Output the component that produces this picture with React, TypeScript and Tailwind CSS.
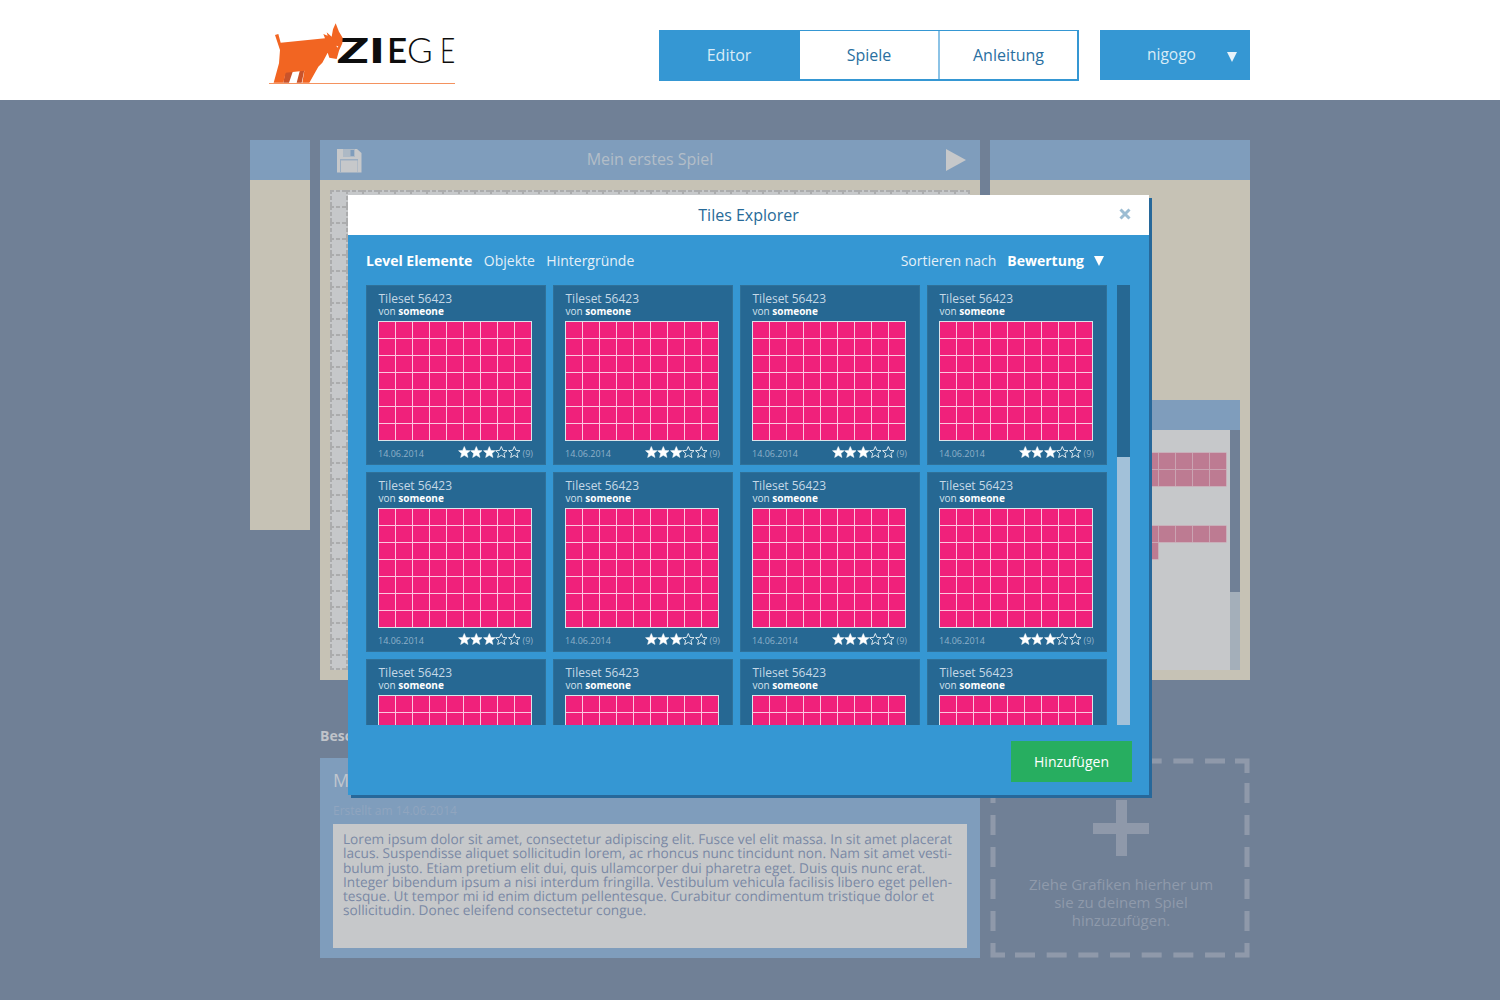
const cards = Array.from({ length: 12 });
const cells = Array.from({ length: 63 });

const lorem = [
  "Lorem ipsum dolor sit amet, consectetur adipiscing elit. Fusce vel elit massa. In sit amet placerat",
  "lacus. Suspendisse aliquet sollicitudin lorem, ac rhoncus nunc tincidunt non. Nam sit amet vesti-",
  "bulum justo. Etiam pretium elit dui, quis ullamcorper dui pharetra eget. Duis quis nunc erat.",
  "Integer bibendum ipsum a nisi interdum fringilla. Vestibulum vehicula facilisis libero eget pellen-",
  "tesque. Ut tempor mi id enim dictum pellentesque. Curabitur condimentum tristique dolor et",
  "sollicitudin. Donec eleifend consectetur congue.",
];

const Logo = () => (
  <div className="relative w-[409px] h-[100px]">
    <div className="absolute left-[87px] top-[37px] h-[25px] flex items-start font-['Lato'] text-[35px] leading-[25px] text-[#0d0d0d]">
      <span className="font-black w-[32px] scale-x-150 origin-left">Z</span>
      <span className="font-black w-[18px] scale-x-150 origin-left">I</span>
      <span className="font-semibold w-[20px]">E</span>
      <span className="font-light w-[33px]">G</span>
      <span className="font-light scale-x-75 origin-left">E</span>
    </div>
    <svg className="absolute left-[15px] top-[20px]" width="90" height="70" viewBox="0 0 270 210">
      <path d="M55 188L72 188L85 150L62 150ZM95 188L110 188L118 150L105 150Z" fill="#c9532a" />
      <path
        d="M30 45L40 42L47 68L180 55L175 42L188 47L185 37L200 50L204 28L212 10L222 35L233 53L232 70L222 92L215 117L193 113L188 98L172 128L160 140L133 188L112 188L118 152L62 158L55 188L26 188L42 130L45 90Z"
        fill="#f26522"
      />
      <path d="M214 77l6 2-3 4z" fill="#ffffff" />
    </svg>
    <div className="absolute left-[19px] top-[83px] w-[186px] h-px bg-[#f4925f]" />
  </div>
);

const Star = ({ filled }: { filled: boolean }) => (
  <svg width="12.6" height="12" viewBox="0 0 24 23">
    <polygon
      points="12,1 15.2,8.4 23,9 17,14.2 19,22 12,17.8 5,22 7,14.2 1,9 8.8,8.4"
      fill={filled ? "#ffffff" : "none"}
      stroke="#ffffff"
      strokeWidth={filled ? 1 : 1.6}
    />
  </svg>
);

const TileCard = ({ footer }: { footer: boolean }) => (
  <div className="h-[180px] border border-[#2f7199] bg-[#266893] px-[11px] pt-[6px]">
    <div className="ml-[0.5px] text-[12px] leading-[13px] text-[#c5d8e6]">Tileset 56423</div>
    <div className="ml-[0.5px] text-[10px] leading-[12px] text-[#d5e3ed]">
      von <span className="font-bold text-white">someone</span>
    </div>
    <div className="mt-[4px] w-[154px] h-[120px] grid grid-cols-[repeat(9,16px)] grid-rows-[repeat(7,16px)] gap-px border border-[#dbe3ea] bg-[#fcc7df]">
      {cells.map((_, i) => (
        <div key={i} className="bg-[#f0217b]" />
      ))}
    </div>
    {footer && (
      <div className="mt-[3px] w-[155px] flex items-start justify-between">
        <span className="mt-[2px] text-[9px] leading-[16px] text-[#8fb1c9]">14.06.2014</span>
        <span className="flex items-start">
          <span className="mt-[2px] flex">
            <Star filled />
            <Star filled />
            <Star filled />
            <Star filled={false} />
            <Star filled={false} />
          </span>
          <span className="mt-[2px] ml-[2px] text-[9px] leading-[16px] text-[#8fb1c9]">(9)</span>
        </span>
      </div>
    )}
  </div>
);

const Modal = () => (
  <div className="absolute left-[348px] top-[195px] w-[801px] h-[600px] shadow-[3px_3px_0_#27689a]">
    <div className="relative h-10 bg-white flex items-center justify-center text-[16px] text-[#276a98]">
      Tiles Explorer
      <svg className="absolute right-[18px] top-[13px]" width="12" height="12" viewBox="0 0 12 12">
        <path d="M1.5 1.5L10.5 10.5M10.5 1.5L1.5 10.5" stroke="#9cbdd3" strokeWidth="3" />
      </svg>
    </div>
    <div className="h-[560px] bg-[#3597d3] pl-[18px] pr-[19px]">
      <div className="h-[50px] flex items-center justify-between pr-[26px] text-[14px] text-[#e4f0f8]">
        <div className="flex gap-[11.5px]">
          <span className="font-bold text-white">Level Elemente</span>
          <span>Objekte</span>
          <span>Hintergründe</span>
        </div>
        <div className="flex items-center">
          <span>Sortieren nach</span>
          <span className="ml-[11px] font-bold text-white">Bewertung</span>
          <span className="ml-[10px] mt-[2px] w-0 h-0 border-x-[5px] border-x-transparent border-t-[10px] border-t-white" />
        </div>
      </div>
      <div className="flex h-[440px]">
        <div className="w-[741px] h-[440px] overflow-hidden grid grid-cols-4 auto-rows-[180px] gap-[7px]">
          {cards.map((_, i) => (
            <TileCard key={i} footer={i < 8} />
          ))}
        </div>
        <div className="ml-[10px] w-[13px] h-[440px] bg-[#a2c1d9]">
          <div className="h-[172px] bg-[#266893]" />
        </div>
      </div>
      <div className="mt-4 -mr-[2px] flex justify-end">
        <button className="w-[121px] h-[41px] bg-[#27ae60] text-[14px] text-white">Hinzufügen</button>
      </div>
    </div>
  </div>
);

const GridCanvas = () => (
  <svg className="absolute inset-0" width="640" height="480">
    <defs>
      <pattern id="tilegrid" width="16" height="16" patternUnits="userSpaceOnUse">
        <path d="M0 1H16M1 0V16" stroke="#abacad" strokeWidth="2" strokeDasharray="4 2" fill="none" />
      </pattern>
    </defs>
    <rect width="640" height="480" fill="#c6c8ca" />
    <rect width="640" height="480" fill="url(#tilegrid)" />
    <path d="M0 479H640M639 0V480" stroke="#abacad" strokeWidth="2" strokeDasharray="4 2" fill="none" />
  </svg>
);

const tileRows = [23, 40, 96, 113];

const LibraryPanel = () => (
  <div className="ml-[10px] mt-[220px] w-[240px]">
    <div className="h-[30px] bg-[#7f9dbc]" />
    <div className="relative flex h-[240px] bg-[#c6c8ca]">
      <div className="absolute left-[142px] top-0">
        {tileRows.map((top, r) => (
          <div key={top} className="absolute left-0 flex gap-px" style={{ top }}>
            {Array.from({ length: r === 3 ? 1 : 5 }).map((_, i) => (
              <div key={i} className="w-4 h-4 bg-[#bd7b92] shadow-[0_0_0_0.5px_#cb98aa]" />
            ))}
          </div>
        ))}
      </div>
      <div className="ml-auto w-2.5 h-full bg-[#a4afba]">
        <div className="h-[162px] bg-[#708096]" />
      </div>
    </div>
  </div>
);

const DropZone = () => (
  <div className="relative mt-[78px] h-[200px] flex flex-col items-center pl-[2px] pt-[117px] text-[15px] leading-[18px] text-[#8f9aab]">
    <svg className="absolute inset-0" width="260" height="200" viewBox="0 0 260 200">
      <g fill="none" stroke="#8f99aa" strokeWidth="5">
        <path d="M3 15V3H15M245 3H257V15M3 185V197H15M245 197H257V185" />
        <path d="M25 3H245M25 197H245" strokeDasharray="20 11.67" />
        <path d="M3 25V185M257 25V185" strokeDasharray="20 12" />
      </g>
    </svg>
    <div className="absolute left-[103px] top-[42px] w-[56px] h-[11px] mt-[23px] bg-[#8f99aa]" />
    <div className="absolute left-[126px] top-[42px] w-[11px] h-[56px] bg-[#8f99aa]" />
    <span>Ziehe Grafiken hierher um</span>
    <span>sie zu deinem Spiel</span>
    <span>hinzuzufügen.</span>
  </div>
);

export default function App() {
  return (
    <div className="relative h-[1000px] overflow-hidden bg-[#708096] font-['Open_Sans',sans-serif]">
      <header className="h-[100px] bg-white flex justify-center">
        <div className="w-[1000px] flex items-start">
          <Logo />
          <nav className="mt-[30px] w-[420px] h-[51px] flex border border-b-2 border-r-2 border-[#3597d3] text-[16px] text-[#2a6f9f]">
            <a className="w-[140px] pr-[2px] flex items-center justify-center bg-[#3597d3] text-[#d9ecf7]">Editor</a>
            <a className="w-[140px] flex items-center justify-center bg-white border-r-2 border-[#8cc3e6]">Spiele</a>
            <a className="flex-1 flex items-center justify-center bg-white">Anleitung</a>
          </nav>
          <div className="ml-[21px] mt-[30px] w-[150px] h-[50px] bg-[#3597d3] flex items-center text-[15.5px] text-[#d9ecf7]">
            <span className="ml-[47px]">nigogo</span>
            <span className="ml-[31px] mt-[4px] w-0 h-0 border-x-[5px] border-x-transparent border-t-[10px] border-t-[#e8f3fa]" />
          </div>
        </div>
      </header>

      <main className="w-[1000px] mx-auto pt-10 flex gap-2.5">
        <div className="w-[60px]">
          <div className="h-10 bg-[#7f9dbc]" />
          <div className="h-[350px] bg-[#c6c2b5]" />
        </div>

        <div className="w-[660px]">
          <div className="h-10 bg-[#7f9dbc] flex items-center justify-between pl-4 pr-[14px] text-[16px] text-[#b3bdc8]">
            <svg width="26" height="25" viewBox="0 0 26 25">
              <path d="M1 1H21L25.500 5V24.500H1Z" fill="#c6c8ca" />
              <path d="M7 1H19V9H7Z" fill="#7f9dbc" opacity="0.35" />
              <path d="M14.500 2H18V8H14.500Z" fill="#7f9dbc" />
              <path d="M4 11H22V24H4Z" fill="#7f9dbc" opacity="0.6" />
              <path d="M5 12.500H21.500V24H5Z" fill="#c6c8ca" />
            </svg>
            <span className="mr-[8px] mb-[2px]">Mein erstes Spiel</span>
            <span className="w-0 h-0 border-y-[11px] border-y-transparent border-l-[20px] border-l-[#c6c8ca]" />
          </div>
          <div className="h-[500px] bg-[#c6c2b5] p-2.5">
            <div className="relative h-[480px]">
              <GridCanvas />
            </div>
          </div>
          <div className="mt-[46px] text-[14px] leading-5 font-bold text-[#c0c4ca]">Beschreibung</div>
          <div className="mt-3 h-[200px] bg-[#7f9dbc] px-[13px] pt-[10px]">
            <div className="text-[18px] leading-6 text-[#c0c6ce]">Mein erstes Spiel</div>
            <div className="mt-[11px] text-[12px] leading-4 text-[#90a5bf]">Erstellt am 14.06.2014</div>
            <div className="mt-[5px] h-[124px] bg-[#c6c8ca] px-[10px] pt-[8px] text-[13.65px] leading-[14.3px] text-[#7a89a5] [text-rendering:geometricPrecision]">
              {lorem.map((line) => (
                <div key={line} className="whitespace-nowrap">
                  {line}
                </div>
              ))}
            </div>
          </div>
        </div>

        <div className="w-[260px]">
          <div className="h-10 bg-[#7f9dbc]" />
          <div className="h-[500px] bg-[#c6c2b5] overflow-hidden">
            <LibraryPanel />
          </div>
          <DropZone />
        </div>
      </main>

      <Modal />
    </div>
  );
}
